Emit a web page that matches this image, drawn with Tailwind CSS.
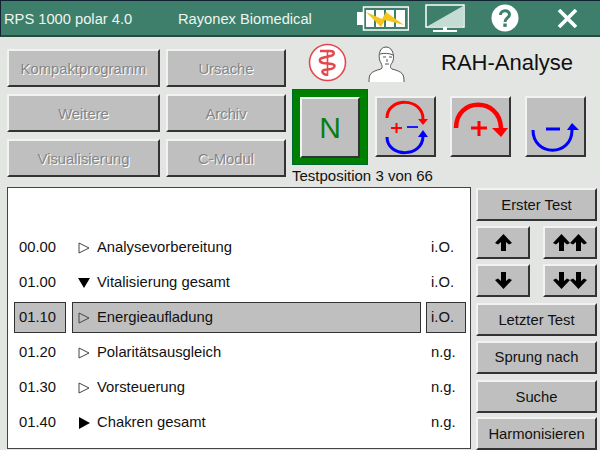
<!DOCTYPE html>
<html lang="de">

<head>
    <meta charset="UTF-8">
    <title>RPS 1000 polar 4.0</title>
    <script src="https://cdn.jsdelivr.net/npm/@tailwindcss/browser@4"></script>
</head>

<body class="bg-[#e3e5e2] overflow-hidden">
    <div class="w-[600px] h-[450px] flex flex-col font-['Liberation_Sans',Arial,sans-serif] text-[#111]">
        <!-- Title bar -->
        <header class="h-[37px] shrink-0 flex items-center bg-[#3d7f6b] border-t border-l border-b-2 border-t-[#123] border-l-[#123] border-b-[#2a4a40] text-[#eef5f0] text-[14.7px]">
            <span class="ml-[3px] pt-[2px] w-[174px]">RPS 1000 polar 4.0</span>
            <span class="pt-[2px] w-[179px]">Rayonex Biomedical</span>
            <svg class="w-[52px] h-[25px]" viewBox="0 0 52 25">
                <rect x="0" y="6" width="6" height="13" fill="#fff" />
                <rect x="6.5" y="1" width="45" height="23" fill="none" stroke="#fff" stroke-width="1.5" />
                <rect x="9" y="4" width="8" height="17" fill="#fff" />
                <rect x="19" y="4" width="8" height="17" fill="#fff" />
                <rect x="29" y="4" width="8" height="17" fill="#fff" />
                <rect x="39" y="4" width="9" height="17" fill="#fff" />
                <path d="M9 6 L25 13 L29 6 L47 19 L28 14 L24 21 Z" fill="#f5c518" />
            </svg>
            <svg class="ml-[16px] mt-[2px] w-[40px] h-[30px]" viewBox="0 0 40 30">
                <rect x="1" y="1" width="38" height="22" fill="#3d7f6b" stroke="#fff" stroke-width="1.5" />
                <path d="M3 22 L38 2 V22 Z" fill="#c5dcd5" />
                <path d="M18 23 h4 v3 h-4 Z M8 26 h24 v2 h-24 Z" fill="#fff" />
            </svg>
            <svg class="ml-[26px] w-[28px] h-[28px]" viewBox="0 0 28 28">
                <circle cx="14" cy="14" r="13.5" fill="#fff" />
                <path d="M9.5 11 C9.5 5.5 18.5 5.5 18.5 10.5 C18.5 14 14 14 14 18" fill="none" stroke="#3d7f6b" stroke-width="3" />
                <rect x="12.3" y="19.5" width="3.4" height="3.4" fill="#3d7f6b" />
            </svg>
            <svg class="ml-[38px] w-[21px] h-[19px]" viewBox="0 0 21 19">
                <path d="M2 1 L19 18 M19 1 L2 18" stroke="#fff" stroke-width="3.6" />
            </svg>
        </header>

        <!-- Upper area -->
        <section class="h-[150px] shrink-0 flex pl-[7px]">
            <div class="mt-[12px] grid grid-cols-[153px_120px] auto-rows-[38px] gap-x-[6px] gap-y-[7px] text-[14.8px] text-[#858585] [text-shadow:1px_1px_0_#fff]">
                <div class="pt-[2px] flex items-center justify-center bg-[#bfbfbf] border-2 border-t-[#f2f2f2] border-l-[#f2f2f2] border-r-[#333] border-b-[#333]">Kompaktprogramm</div>
                <div class="pt-[2px] flex items-center justify-center bg-[#bfbfbf] border-2 border-t-[#f2f2f2] border-l-[#f2f2f2] border-r-[#333] border-b-[#333]">Ursache</div>
                <div class="pt-[2px] flex items-center justify-center bg-[#bfbfbf] border-2 border-t-[#f2f2f2] border-l-[#f2f2f2] border-r-[#333] border-b-[#333]">Weitere</div>
                <div class="pt-[2px] flex items-center justify-center bg-[#bfbfbf] border-2 border-t-[#f2f2f2] border-l-[#f2f2f2] border-r-[#333] border-b-[#333]">Archiv</div>
                <div class="pt-[2px] flex items-center justify-center bg-[#bfbfbf] border-2 border-t-[#f2f2f2] border-l-[#f2f2f2] border-r-[#333] border-b-[#333]">Visualisierung</div>
                <div class="pt-[2px] flex items-center justify-center bg-[#bfbfbf] border-2 border-t-[#f2f2f2] border-l-[#f2f2f2] border-r-[#333] border-b-[#333]">C-Modul</div>
            </div>

            <div class="ml-[6px] flex-1 flex flex-col">
                <!-- Icons and heading -->
                <div class="h-[52px] flex items-start">
                    <svg class="ml-[16px] mt-[6px] w-[39px] h-[39px]" viewBox="0 0 39 39">
                        <circle cx="19.5" cy="19.5" r="18" fill="#fff" stroke="#e4474c" stroke-width="1.6" />
                        <path d="M19.5 7 V33" stroke="#e4474c" stroke-width="1.6" />
                        <path d="M12 8 H22 C27 8 27 12 22 13 L14 15 C11 16 11 19 15 20 L24 21 C28 22 27 25 23 26 L16 27 C13 28 14 31 19 32" fill="none" stroke="#e4474c" stroke-width="2.4" />
                    </svg>
                    <svg class="ml-[21px] mt-[8px] w-[37px] h-[37px]" viewBox="0 0 37 37">
                        <path d="M1 37 C1 29 2 27 13 24 C15 23 14 20 13 18 C10 14 10 2 18 2 C26 2 27 14 24 18 C22 20 22 23 24 24 C35 27 36 29 36 37" fill="#fff" stroke="#555" stroke-width="1" />
                        <path d="M12 9 C16 8 21 8 25 10 M15 12 h3 M21 12 h3 M19 14 v3 M17 19 h4" fill="none" stroke="#555" stroke-width="1" />
                    </svg>
                    <h1 class="ml-[36px] mt-[12px] text-[22px] leading-[28px] font-normal whitespace-nowrap">RAH-Analyse</h1>
                </div>

                <!-- Mode buttons -->
                <div class="flex items-start">
                    <div class="w-[76px] h-[76px] p-[7px] bg-[#008000] border border-[#063]">
                        <div class="w-[60px] h-[61px] flex items-center justify-center bg-[#bfbfbf] border-2 border-t-[#f2f2f2] border-l-[#f2f2f2] border-r-[#333] border-b-[#333] text-[#0a7d12] text-[30px]">N</div>
                    </div>
                    <div class="ml-[7px] mt-[7px] w-[61px] h-[61px] bg-[#bfbfbf] border-2 border-t-[#f2f2f2] border-l-[#f2f2f2] border-r-[#333] border-b-[#333]">
                        <svg class="w-[57px] h-[57px]" viewBox="0 0 57 57">
                            <path d="M10 20 C10 -1 46 -1 46 21" fill="none" stroke="#f00" stroke-width="3" />
                            <path d="M41 21 H51 L46 27 Z" fill="#f00" />
                            <path d="M14 30 H25 M19.5 25 V35" stroke="#f00" stroke-width="2" />
                            <path d="M30 29 H41" stroke="#1a1aff" stroke-width="2" />
                            <path d="M10 39 C10 60 46 60 46 38" fill="none" stroke="#00f" stroke-width="3" />
                            <path d="M41 39 H51 L46 32 Z" fill="#00f" />
                        </svg>
                    </div>
                    <div class="ml-[14px] mt-[7px] w-[61px] h-[61px] bg-[#bfbfbf] border-2 border-t-[#f2f2f2] border-l-[#f2f2f2] border-r-[#333] border-b-[#333]">
                        <svg class="w-[57px] h-[57px]" viewBox="0 0 57 57">
                            <path d="M4 30 C4 -1 48 -1 49 30" fill="none" stroke="#f00" stroke-width="4.5" />
                            <path d="M40 30 H56 L49 39 Z" fill="#f00" />
                            <path d="M19 30 H35 M27 23 V38" stroke="#f00" stroke-width="3" />
                        </svg>
                    </div>
                    <div class="ml-[14px] mt-[7px] w-[61px] h-[61px] bg-[#bfbfbf] border-2 border-t-[#f2f2f2] border-l-[#f2f2f2] border-r-[#333] border-b-[#333]">
                        <svg class="w-[57px] h-[57px]" viewBox="0 0 57 57">
                            <path d="M6 32 C6 59 45 59 45 32" fill="none" stroke="#00f" stroke-width="3" />
                            <path d="M40 32 H52 L45 25 Z" fill="#00f" />
                            <path d="M19 31 H33" stroke="#00f" stroke-width="3" />
                        </svg>
                    </div>
                </div>
                <p class="mt-[2px] text-[15px] leading-[17px]">Testposition 3 von 66</p>
            </div>
        </section>

        <!-- Test list and navigation -->
        <section class="flex pl-[7px]">
            <div class="w-[464px] h-[262px] pt-[42px] pl-[6px] bg-white border border-[#444] text-[14.8px]">
                <div class="h-[35px] flex items-center">
                    <span class="w-[52px] pl-[5px]">00.00</span>
                    <div class="w-[349px] ml-[6px] pl-[6px] flex items-center">
                        <svg class="w-[12px] h-[12px]" viewBox="0 0 12 12"><path d="M1 1 L11 6 L1 11 Z" fill="none" stroke="#444" /></svg>
                        <span class="ml-[7px]">Analysevorbereitung</span>
                    </div>
                    <span class="w-[40px] ml-[5px] pl-[5px]">i.O.</span>
                </div>
                <div class="h-[35px] flex items-center">
                    <span class="w-[52px] pl-[5px]">01.00</span>
                    <div class="w-[349px] ml-[6px] pl-[6px] flex items-center">
                        <svg class="w-[12px] h-[12px]" viewBox="0 0 12 12"><path d="M0 1 H12 L6 11 Z" fill="#000" /></svg>
                        <span class="ml-[7px]">Vitalisierung gesamt</span>
                    </div>
                    <span class="w-[40px] ml-[5px] pl-[5px]">i.O.</span>
                </div>
                <div class="h-[35px] flex items-center">
                    <span class="w-[52px] h-[31px] pl-[4px] flex items-center bg-[#bfbfbf] border border-[#333]">01.10</span>
                    <div class="w-[349px] h-[31px] ml-[6px] pl-[5px] flex items-center bg-[#bfbfbf] border border-[#333]">
                        <svg class="w-[12px] h-[12px]" viewBox="0 0 12 12"><path d="M1 1 L11 6 L1 11 Z" fill="none" stroke="#444" /></svg>
                        <span class="ml-[7px]">Energieaufladung</span>
                    </div>
                    <span class="w-[40px] h-[31px] ml-[5px] pl-[4px] flex items-center bg-[#bfbfbf] border border-[#333]">i.O.</span>
                </div>
                <div class="h-[35px] flex items-center">
                    <span class="w-[52px] pl-[5px]">01.20</span>
                    <div class="w-[349px] ml-[6px] pl-[6px] flex items-center">
                        <svg class="w-[12px] h-[12px]" viewBox="0 0 12 12"><path d="M1 1 L11 6 L1 11 Z" fill="none" stroke="#444" /></svg>
                        <span class="ml-[7px]">Polaritätsausgleich</span>
                    </div>
                    <span class="w-[40px] ml-[5px] pl-[5px]">n.g.</span>
                </div>
                <div class="h-[35px] flex items-center">
                    <span class="w-[52px] pl-[5px]">01.30</span>
                    <div class="w-[349px] ml-[6px] pl-[6px] flex items-center">
                        <svg class="w-[12px] h-[12px]" viewBox="0 0 12 12"><path d="M1 1 L11 6 L1 11 Z" fill="none" stroke="#444" /></svg>
                        <span class="ml-[7px]">Vorsteuerung</span>
                    </div>
                    <span class="w-[40px] ml-[5px] pl-[5px]">n.g.</span>
                </div>
                <div class="h-[35px] flex items-center">
                    <span class="w-[52px] pl-[5px]">01.40</span>
                    <div class="w-[349px] ml-[6px] pl-[6px] flex items-center">
                        <svg class="w-[12px] h-[12px]" viewBox="0 0 12 12"><path d="M1 0 L12 6 L1 12 Z" fill="#000" /></svg>
                        <span class="ml-[7px]">Chakren gesamt</span>
                    </div>
                    <span class="w-[40px] ml-[5px] pl-[5px]">n.g.</span>
                </div>
            </div>

            <div class="ml-[5px] w-[121px] flex flex-col text-[14.8px]">
                <div class="mt-[1px] pt-[1px] h-[33px] flex items-center justify-center bg-[#bfbfbf] border-2 border-t-[#f2f2f2] border-l-[#f2f2f2] border-r-[#333] border-b-[#333]">Erster Test</div>
                <div class="mt-[5px] grid grid-cols-[54px_54px] auto-rows-[33px] justify-between gap-y-[5px]">
                    <div class="flex items-center justify-center bg-[#bfbfbf] border-2 border-t-[#f2f2f2] border-l-[#f2f2f2] border-r-[#333] border-b-[#333]">
                        <svg class="w-[17px] h-[17px]" viewBox="0 0 17 17"><path d="M8.5 0 L17 9 L14 10.5 L11 8 V17 H6 V8 L3 10.5 L0 9 Z" fill="#000" /></svg>
                    </div>
                    <div class="flex items-center justify-center bg-[#bfbfbf] border-2 border-t-[#f2f2f2] border-l-[#f2f2f2] border-r-[#333] border-b-[#333]">
                        <svg class="w-[17px] h-[17px]" viewBox="0 0 17 17"><path d="M8.5 0 L17 9 L14 10.5 L11 8 V17 H6 V8 L3 10.5 L0 9 Z" fill="#000" /></svg>
                        <svg class="w-[17px] h-[17px]" viewBox="0 0 17 17"><path d="M8.5 0 L17 9 L14 10.5 L11 8 V17 H6 V8 L3 10.5 L0 9 Z" fill="#000" /></svg>
                    </div>
                    <div class="flex items-center justify-center bg-[#bfbfbf] border-2 border-t-[#f2f2f2] border-l-[#f2f2f2] border-r-[#333] border-b-[#333]">
                        <svg class="w-[17px] h-[17px]" viewBox="0 0 17 17"><path d="M8.5 17 L17 8 L14 6.5 L11 9 V0 H6 V9 L3 6.5 L0 8 Z" fill="#000" /></svg>
                    </div>
                    <div class="flex items-center justify-center bg-[#bfbfbf] border-2 border-t-[#f2f2f2] border-l-[#f2f2f2] border-r-[#333] border-b-[#333]">
                        <svg class="w-[17px] h-[17px]" viewBox="0 0 17 17"><path d="M8.5 17 L17 8 L14 6.5 L11 9 V0 H6 V9 L3 6.5 L0 8 Z" fill="#000" /></svg>
                        <svg class="w-[17px] h-[17px]" viewBox="0 0 17 17"><path d="M8.5 17 L17 8 L14 6.5 L11 9 V0 H6 V9 L3 6.5 L0 8 Z" fill="#000" /></svg>
                    </div>
                </div>
                <div class="mt-[6px] pt-[1px] h-[33px] flex items-center justify-center bg-[#bfbfbf] border-2 border-t-[#f2f2f2] border-l-[#f2f2f2] border-r-[#333] border-b-[#333]">Letzter Test</div>
                <div class="mt-[5px] h-[33px] flex items-center justify-center bg-[#bfbfbf] border-2 border-t-[#f2f2f2] border-l-[#f2f2f2] border-r-[#333] border-b-[#333]">Sprung nach</div>
                <div class="mt-[6px] pt-[1px] h-[33px] flex items-center justify-center bg-[#bfbfbf] border-2 border-t-[#f2f2f2] border-l-[#f2f2f2] border-r-[#333] border-b-[#333]">Suche</div>
                <div class="mt-[4px] pt-[1px] h-[33px] flex items-center justify-center bg-[#bfbfbf] border-2 border-t-[#f2f2f2] border-l-[#f2f2f2] border-r-[#333] border-b-[#333]">Harmonisieren</div>
            </div>
        </section>
    </div>
</body>

</html>
